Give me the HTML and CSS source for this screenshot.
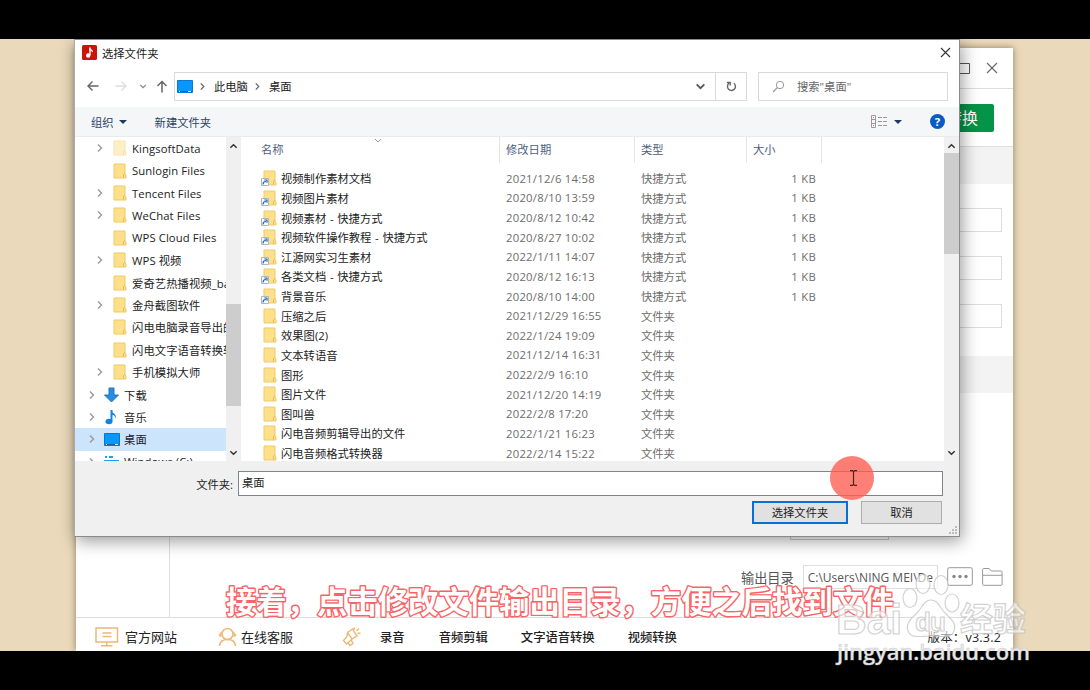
FILE: index.html
```
<!DOCTYPE html>
<html lang="zh-CN">
<head>
    <meta charset="UTF-8">
    <title>选择文件夹</title>
    <link rel="stylesheet" href="styles.css">
</head>
<body>
    <svg width="0" height="0" class="defs">
        <symbol id="folder" viewBox="0 0 14 16"><path d="M1 1h11v10l1 1v3H1z" fill="#ffe08a" stroke="#efc968" stroke-width="1"/><path d="M10.500 14.500v-3l1.500-1.500" fill="none" stroke="#e5b94f"/></symbol>
        <symbol id="desk" viewBox="0 0 16 13"><path d="M.5.5h15v12H.5z" fill="#0a97fb" stroke="#0b78d0"/><path d="M1 11.500h14" stroke="#0666b8"/><path d="M2 11.500h1M11 11.500h3" stroke="#d8efff"/></symbol>
        <symbol id="right" viewBox="0 0 8 10"><path d="M2 1.500l3.500 3.500L2 8.500" fill="none" stroke="currentColor" stroke-width="1.400"/></symbol>
        <symbol id="down" viewBox="0 0 10 8"><path d="M1.500 2L5 5.500 8.500 2" fill="none" stroke="currentColor" stroke-width="1.600"/></symbol>
        <symbol id="up" viewBox="0 0 10 8"><path d="M1.500 6L5 2.500 8.500 6" fill="none" stroke="currentColor" stroke-width="1.600"/></symbol>
        <symbol id="link" viewBox="0 0 8 8"><path d="M.5.5h7v7h-7z" fill="#fff" stroke="#a9b8c8"/><path d="M2 6.500c0-2 1-3 3-3M3.300 2h2.700v2.700" fill="none" stroke="#1c62b5" stroke-width="1.200"/></symbol>
    </svg>

    <div class="screen">
        <div class="app">
            <div class="app-title">
                <svg width="11" height="11"><path d="M.5.5h10v10H.5z" fill="none" stroke="#555"/></svg>
                <svg width="12" height="12"><path d="M1 1l10 10M11 1L1 11" stroke="#666" stroke-width="1.100"/></svg>
            </div>
            <div class="app-tools"><button class="convert">转换</button></div>
            <div class="app-main">
                <div class="side"></div>
                <div class="panel">
                    <div class="band"></div>
                    <div class="fields"><i></i><i></i><i></i></div>
                    <div class="band second"></div>
                    <div class="stub"></div>
                    <div class="output">
                        <span>输出目录</span>
                        <div class="path">C:\Users\NING MEI\Desktop</div>
                        <svg class="more" width="26" height="20"><rect x=".7" y=".7" width="24.600" height="17.600" rx="1.500" fill="#fff" stroke="#999"/><g fill="#888"><circle cx="7" cy="9.500" r="1.700"/><circle cx="13" cy="9.500" r="1.700"/><circle cx="19" cy="9.500" r="1.700"/></g></svg>
                        <svg width="21" height="20"><path d="M.6 17.500V2.600Q.6 1.500 1.700 1.500h5.500l2 2.500h9.700q1.200 0 1.200 1.200v12.300q0 .8-.9.800H1.500q-.9 0-.9-.8zM.6 8.300h19.500" fill="none" stroke="#999"/></svg>
                    </div>
                </div>
            </div>
            <div class="status">
                <svg width="24" height="20" class="s1"><g fill="none" stroke="#edb877" stroke-width="1.500"><path d="M1 1h21.500v14H1zM11.700 15v3.500M6 18.700h11.500M7.500 6h9M7.500 9.500h9"/></g></svg>
                <span class="t1">官方网站</span>
                <svg width="19" height="20" class="s2"><g fill="none" stroke="#edb877" stroke-width="1.600"><circle cx="9.500" cy="7" r="5.500"/><path d="M3.500 5.500L1.500 8l2 1.500M15.500 5.500l2 2.500-2 1.500M1.500 19c.3-4 3-6.500 8-6.500s7.700 2.500 8 6.500"/></g></svg>
                <span class="t2">在线客服</span>
                <svg width="19" height="20" class="s3"><g fill="none" stroke="#edb877" stroke-width="1.400"><path d="M5.500 5.500l5-3.500 4.500 7-5 3zM5.500 5.500l-.5 4-3.500 4 3 3.500 4-3.500 1.500-1.500M6 16l2 2.500 3-2-1.500-3M12 2.500L12.500.5M14.500 4l2.500-2.500M15.500 6.500l3-.5"/></g></svg>
                <b class="a1">录音</b><b class="a2">音频剪辑</b><b class="a3">文字语音转换</b><b class="a4">视频转换</b>
                <span class="version">版本：v3.3.2</span>
            </div>
        </div>

        <div class="dialog">
            <div class="titlebar">
                <svg width="15" height="15"><rect width="15" height="15" rx="1.500" fill="#c91409"/><path d="M8 2.500v7.500" stroke="#fff" stroke-width="1.400"/><circle cx="6.200" cy="10.500" r="2.200" fill="#fff"/><path d="M7.500 2c.5 2.500 4 2.500 3.500 5.500-1-1.500-2-1.500-3.500-2z" fill="#fff"/></svg>
                <span>选择文件夹</span>
                <svg class="close" width="11" height="11"><path d="M1 1l9 9M10 1L1 10" stroke="#333" stroke-width="1.100"/></svg>
            </div>
            <div class="nav">
                <svg class="back" width="12" height="12"><path d="M11.500 6H1M5.500 1.500L1 6l4.500 4.500" fill="none" stroke="#666" stroke-width="1.400"/></svg>
                <svg class="fwd" width="12" height="12"><path d="M.5 6H11M6.500 1.500L11 6l-4.500 4.500" fill="none" stroke="#ddd" stroke-width="1.400"/></svg>
                <svg class="recent" width="8" height="7"><use href="#down"/></svg>
                <svg class="upward" width="12" height="13"><path d="M6 12.500V1.500M1.500 6L6 1.500 10.500 6" fill="none" stroke="#666" stroke-width="1.500"/></svg>
                <div class="address">
                    <svg width="16" height="13"><use href="#desk"/></svg>
                    <svg class="sep" width="7" height="9"><use href="#right"/></svg>
                    <span>此电脑</span>
                    <svg class="sep" width="7" height="9"><use href="#right"/></svg>
                    <span>桌面</span>
                    <svg class="drop" width="11" height="9"><use href="#down"/></svg>
                    <div class="refresh"><svg width="11" height="12"><path d="M3 3.300A4 4 0 1 0 7.800 3.200M1 2.500h3.200v3" fill="none" stroke="#666" stroke-width="1.400"/></svg></div>
                </div>
                <div class="search">
                    <svg width="13" height="13"><circle cx="8" cy="5" r="3.700" fill="none" stroke="#999"/><path d="M5.300 7.700L1 12" stroke="#999" stroke-width="1.200"/></svg>
                    <span>搜索"桌面"</span>
                </div>
            </div>
            <div class="toolbar">
                <span>组织</span><i class="caret"></i>
                <span class="newdir">新建文件夹</span>
                <svg class="view" width="16" height="13"><g fill="none" stroke="#999"><path d="M.5.5h4v12h-4zM.5 4.500h4M.5 8.500h4M7 2.500h4M12 2.500h4M7 6.500h4M12 6.500h4M7 10.500h4M12 10.500h4"/></g><path d="M2 2.500h1M2 10.500h1" stroke="#d66"/></svg>
                <i class="caret"></i>
                <div class="help">?</div>
            </div>
            <div class="content">
                <div class="tree" id="tree"></div>
                <div class="scroll left"><svg width="9" height="8"><use href="#up"/></svg><i></i><svg width="9" height="8"><use href="#down"/></svg></div>
                <div class="list">
                    <div class="row head"><span>名称</span><span>修改日期</span><span>类型</span><span>大小</span>
                        <svg class="sort" width="8" height="6"><path d="M1 1l3 3 3-3" fill="none" stroke="#999"/></svg>
                    </div>
                    <div id="files"></div>
                </div>
                <div class="scroll main"><svg width="9" height="8"><use href="#up"/></svg><i></i><svg width="9" height="8"><use href="#down"/></svg></div>
            </div>
            <div class="footer">
                <div class="name"><label>文件夹:</label><div class="input">桌面</div></div>
                <div class="buttons"><button class="primary">选择文件夹</button><button>取消</button></div>
                <svg class="grip" width="9" height="9"><path d="M7 1h2M4 4h2M7 4h2M1 7h2M4 7h2M7 7h2" stroke="#aaa" stroke-width="1.500"/></svg>
            </div>
        </div>

        <div class="click"><svg width="9" height="16"><path d="M1 .7h2.500l1 1 1-1H8M4.500 1.500v13M1 15.300h2.500l1-1 1 1H8" fill="none" stroke="#4a2522" stroke-width="1.200"/></svg></div>
        <svg class="subtitle" width="680" height="44"><text x="4" y="33">接着，点击修改文件输出目录，方便之后找到文件</text></svg>
    </div>

    <div class="watermark">
        <svg width="200" height="100" viewBox="0 0 200 100">
            <g class="paw">
                <ellipse cx="75" cy="32" rx="7" ry="9.500"/><ellipse cx="88" cy="18" rx="7" ry="9.500"/><ellipse cx="106" cy="19" rx="7" ry="9.500"/><ellipse cx="117" cy="37" rx="7" ry="9"/>
                <path d="M96 34c-7 0-9 8-14 13s-12 10-9 18 11 5 23 5 20 3 23-5-4-13-9-18-7-13-14-13z"/>
            </g>
            <text class="logo" x="1" y="68" textLength="66" lengthAdjust="spacingAndGlyphs">Bai</text>
            <text class="logo du" x="80" y="65" textLength="31">du</text>
            <text class="logo cn" x="125" y="65" textLength="66">经验</text>
            <text class="url" x="2" y="94" textLength="193">jingyan.baidu.com</text>
        </svg>
    </div>

<script>
    // [icon, label, has arrow]
    const tree = [
        ['folder', 'KingsoftData', 1], ['folder', 'Sunlogin Files', 0], ['folder', 'Tencent Files', 1],
        ['folder', 'WeChat Files', 1], ['folder', 'WPS Cloud Files', 0], ['folder', 'WPS 视频', 1],
        ['folder', '爱奇艺热播视频_baidu', 0], ['folder', '金舟截图软件', 1], ['folder', '闪电电脑录音导出的文件', 0],
        ['folder', '闪电文字语音转换软件', 0], ['folder', '手机模拟大师', 1],
        ['download', '下载', 1], ['music', '音乐', 1], ['desk', '桌面', 1], ['drive', 'Windows (C:)', 1]
    ];
    const icons = {
        folder: '<svg width="14" height="16"><use href="#folder"/></svg>',
        desk: '<svg width="16" height="13"><use href="#desk"/></svg>',
        download: '<svg width="15" height="16"><path d="M5 1h5v7h4.500l-7 7-7-7H5z" fill="#2b8de0" stroke="#1f74c4"/></svg>',
        music: '<svg width="15" height="16"><ellipse cx="5" cy="12.500" rx="3.500" ry="2.700" fill="#1583dc"/><path d="M7.500 12V1" stroke="#1583dc" stroke-width="2"/><path d="M7 1c1 3.500 7 4 4 9 .5-3-1-4-4-4.500z" fill="#1583dc"/></svg>',
        drive: '<svg width="15" height="16"><path d="M1 3h2M5 3h4M0 7h14v5H0z" stroke="#18a4e8" stroke-width="2" fill="#aaa"/></svg>'
    };
    document.getElementById('tree').innerHTML = tree.map(([icon, label, arrow]) => {
        const cls = (icon === 'folder' ? 'sub' : 'root') + (icon === 'desk' ? ' selected' : '');
        return `<div class="node ${cls}"><div class="arrow">${arrow ? '<svg width="8" height="10"><use href="#right"/></svg>' : ''}</div><div class="icon">${icons[icon]}</div><span>${label}</span></div>`;
    }).join('');

    const files = [
        ['视频制作素材文档', '2021/12/6 14:58', 1], ['视频图片素材', '2020/8/10 13:59', 1],
        ['视频素材 - 快捷方式', '2020/8/12 10:42', 1], ['视频软件操作教程 - 快捷方式', '2020/8/27 10:02', 1],
        ['江源网实习生素材', '2022/1/11 14:07', 1], ['各类文档 - 快捷方式', '2020/8/12 16:13', 1],
        ['背景音乐', '2020/8/10 14:00', 1], ['压缩之后', '2021/12/29 16:55', 0],
        ['效果图(2)', '2022/1/24 19:09', 0], ['文本转语音', '2021/12/14 16:31', 0],
        ['图形', '2022/2/9 16:10', 0], ['图片文件', '2021/12/20 14:19', 0],
        ['图叫兽', '2022/2/8 17:20', 0], ['闪电音频剪辑导出的文件', '2022/1/21 16:23', 0],
        ['闪电音频格式转换器', '2022/2/14 15:22', 0]
    ];
    document.getElementById('files').innerHTML = files.map(([name, date, link]) =>
        `<div class="row"><span class="file"><i class="ficon"><svg width="14" height="16"><use href="#folder"/></svg>${link ? '<svg class="link" width="8" height="8"><use href="#link"/></svg>' : ''}</i>${name}</span><span class="date">${date}</span><span>${link ? '快捷方式' : '文件夹'}</span><span class="size">${link ? '1 KB' : ''}</span></div>`
    ).join('');
</script>
</body>
</html>
```
FILE: styles.css
```
* {
    box-sizing: border-box;
}
body {
    display: flow-root;
    margin: 0;
    height: 690px;
    overflow: hidden;
    background: #000;
    font-family: "Open Sans", "Noto Sans CJK SC", sans-serif;
    font-size: 11.3px;
    color: #222;
}
svg {
    display: block;
    flex: none;
}
.defs {
    position: absolute;
}
span, b, label {
    white-space: nowrap;
}
button {
    font-family: inherit;
    padding: 0;
}
.screen {
    display: flow-root;
    position: relative;
    margin-top: 39px;
    height: 612px;
    background: #ead9bb;
    overflow: hidden;
}

/* application window behind the dialog */
.app {
    margin: 9px 0 0 76px;
    width: 937px;
    height: 603px;
    display: flex;
    flex-direction: column;
    background: #fff;
    box-shadow: 0 0 7px rgba(80, 60, 30, 0.6);
}
.app-title {
    height: 41px;
    display: flex;
    justify-content: flex-end;
    align-items: center;
    gap: 16px;
    padding-right: 15px;
    border-bottom: 1px solid #ddd;
}
.app-tools {
    height: 58px;
    display: flex;
    justify-content: flex-end;
    align-items: center;
    padding-right: 19px;
    border-bottom: 1px solid #ddd;
}
.convert {
    width: 84px;
    height: 28px;
    border: 0;
    border-radius: 2px;
    background: #049347;
    color: #fff;
    font-size: 16px;
    line-height: 28px;
    text-align: right;
    padding-right: 16px;
}
.app-main {
    flex: 1;
    display: flex;
}
.side {
    width: 94px;
    border-right: 1px solid #ddd;
}
.panel {
    flex: 1;
}
.band {
    height: 37px;
    background: #f3f3f3;
}
.fields {
    height: 172px;
    padding: 24px 11px 0 0;
    display: flex;
    flex-direction: column;
    align-items: flex-end;
    gap: 24px;
}
.fields i {
    width: 150px;
    height: 24px;
    border: 1px solid #ddd;
}
.stub {
    width: 99px;
    height: 147px;
    margin-left: 620px;
    border: 1px solid #ccc;
    border-top: 0;
}
.output {
    height: 24px;
    margin-top: 25px;
    padding-left: 571px;
    display: flex;
    align-items: center;
    font-size: 13.2px;
    color: #555;
}
.path {
    width: 135px;
    height: 24px;
    margin: 0 9px;
    padding: 0 4px;
    border: 1px solid #ddd;
    font-size: 12px;
    line-height: 23px;
    white-space: nowrap;
    overflow: clip;
    overflow-clip-margin: content-box;
}
.more {
    margin-right: 9px;
}
.status {
    height: 34px;
    display: flex;
    align-items: center;
    padding: 4px 12px 0 19px;
    border-top: 1px solid #ddd;
    font-size: 13px;
}
.status b {
    font-weight: 500;
    font-size: 12.3px;
}
.t1 { margin-left: 6px; }
.s2 { margin-left: 41px; }
.t2 { margin-left: 4px; }
.s3 { margin-left: 49px; }
.a1 { margin-left: 19px; }
.a2 { margin-left: 34px; }
.a3, .a4 { margin-left: 33px; }
.version {
    margin-left: auto;
    font-size: 12.5px;
    letter-spacing: 0.2px;
}

/* folder dialog */
.dialog {
    position: absolute;
    left: 74px;
    top: 0;
    width: 886px;
    height: 498px;
    display: flex;
    flex-direction: column;
    background: #fff;
    border: 1px solid #8a8a8a;
    border-left-color: #aaa;
    box-shadow: 2px 4px 16px rgba(0, 0, 0, 0.4);
}
.titlebar {
    height: 25px;
    display: flex;
    align-items: center;
    padding: 0 8px 0 7px;
    gap: 5px;
}
.close {
    margin-left: auto;
}
.nav {
    height: 42px;
    display: flex;
    align-items: center;
    padding-left: 12px;
}
.fwd { margin-left: 16px; }
.recent { margin-left: 12px; color: #888; }
.upward { margin-left: 9px; }
.address {
    width: 573px;
    height: 29px;
    margin-left: 6px;
    padding-left: 2px;
    display: flex;
    align-items: center;
    border: 1px solid #d9d9d9;
}
.sep {
    margin: 0 8px 0 6px;
    color: #666;
}
.drop {
    margin-left: auto;
    margin-right: 9px;
    color: #555;
}
.refresh {
    width: 31px;
    height: 27px;
    display: flex;
    align-items: center;
    justify-content: center;
    border-left: 1px solid #d9d9d9;
}
.search {
    width: 190px;
    height: 29px;
    margin-left: 11px;
    padding-left: 13px;
    display: flex;
    align-items: center;
    gap: 12px;
    border: 1px solid #d9d9d9;
    color: #666;
}
.toolbar {
    height: 30px;
    display: flex;
    align-items: center;
    padding: 0 14px 0 16px;
    background: #f4f6f8;
    border-bottom: 1px solid #e9ebee;
    color: #2c4466;
}
.caret {
    margin-left: 5px;
    border: 4px solid transparent;
    border-top: 4px solid #1c3a63;
    border-bottom: 0;
}
.newdir {
    margin-left: 28px;
}
.view {
    margin-left: auto;
    margin-right: 2px;
}
.help {
    width: 15px;
    height: 15px;
    margin-left: 28px;
    border-radius: 50%;
    background: #0b5cc0;
    color: #fff;
    font-weight: bold;
    line-height: 15px;
    text-align: center;
}
.content {
    height: 324px;
    display: flex;
    overflow: hidden;
}
.tree {
    width: 151px;
    overflow: hidden;
}
.node {
    height: 22.42px;
    display: flex;
    align-items: center;
    letter-spacing: 0.09px;
}
.arrow {
    flex: none;
    width: 8px;
    color: #999;
}
.icon {
    flex: none;
}
.sub {
    padding-left: 21px;
}
.sub .icon {
    width: 14px;
    margin: 0 5px 0 9px;
}
.node:first-child .icon {
    opacity: 0.5;
}
.root {
    padding-left: 13px;
}
.root .icon {
    width: 16px;
    margin: 0 4px 0 8px;
}
.selected {
    background: #cce4fc;
}
.scroll {
    width: 15px;
    display: flex;
    flex-direction: column;
    align-items: center;
    padding: 5px 0 4px;
    background: #f0f0f0;
    color: #333;
}
.scroll i {
    width: 100%;
    background: #cdcdcd;
}
.scroll svg:last-child {
    margin-top: auto;
}
.left i {
    height: 102px;
    margin-top: 154px;
}
.main i {
    height: 101px;
    margin-top: 3px;
}
.list {
    flex: 1;
    overflow: hidden;
}
.row {
    height: 19.63px;
    display: grid;
    grid-template-columns: 259px 135px 112px 75px;
    align-items: center;
    color: #6d6d6d;
}
.row > span {
    padding-left: 6px;
}
.row.head {
    position: relative;
    height: 31.5px;
    color: #4d607c;
}
.row.head span {
    height: 26px;
    line-height: 26px;
    border-right: 1px solid #e5e5e5;
    align-self: start;
}
.row.head span:first-child {
    padding-left: 20px;
}
.sort {
    position: absolute;
    left: 133px;
    top: 1px;
}
.row .file {
    display: flex;
    align-items: center;
    padding-left: 22px;
    color: #222;
    word-spacing: 0.8px;
}
.row .date {
    letter-spacing: 0.24px;
}
.ficon {
    position: relative;
    margin-right: 4px;
}
.link {
    position: absolute;
    left: -2px;
    bottom: 0;
}
.row .size {
    text-align: right;
    padding-right: 6px;
    letter-spacing: 0.3px;
}
.footer {
    position: relative;
    flex: 1;
    padding: 10px 16px 0 0;
    background: #f0f0f0;
}
.name, .buttons {
    display: flex;
    justify-content: flex-end;
}
.name {
    align-items: center;
    gap: 5px;
}
.input {
    width: 705px;
    height: 25px;
    padding-left: 3px;
    line-height: 21px;
    background: #fff;
    border: 1px solid #7f858d;
}
.buttons {
    margin-top: 5px;
    gap: 13px;
    padding-right: 1px;
}
.buttons button {
    width: 81px;
    height: 23px;
    font-size: 11.3px;
    line-height: 18px;
    background: #e1e1e1;
    border: 1px solid #adadad;
    color: #222;
}
.buttons .primary {
    width: 96px;
    border: 2px solid #0a6fd6;
}
.grip {
    position: absolute;
    right: 2px;
    bottom: 1px;
}

/* recording overlays */
.click {
    position: absolute;
    left: 830px;
    top: 417px;
    width: 44px;
    height: 44px;
    display: flex;
    align-items: center;
    justify-content: center;
    border-radius: 50%;
    background: rgba(255, 92, 80, 0.78);
    padding-left: 3px;
}
.subtitle {
    position: absolute;
    left: 222px;
    top: 541px;
    font-family: "Noto Sans CJK SC", sans-serif;
    font-size: 30.35px;
    font-weight: 700;
}
.subtitle text {
    fill: #fff;
    stroke: #f86466;
    stroke-width: 2.8;
    stroke-linejoin: round;
    paint-order: stroke fill;
}
.watermark {
    position: absolute;
    left: 835px;
    top: 566px;
}
.paw, .logo, .url {
    fill: rgba(255, 255, 255, 0.6);
    stroke: rgba(195, 195, 195, 0.75);
    stroke-width: 1.2;
}
.logo {
    font-family: "Liberation Sans", sans-serif;
    font-weight: bold;
    font-size: 42px;
}
.du {
    font-size: 26px;
}
.cn {
    font-family: "Noto Sans CJK SC", sans-serif;
    font-size: 33px;
}
.url {
    font-family: "Open Sans", sans-serif;
    font-size: 22px;
    font-weight: 600;
    fill: #e8e8e8;
    stroke-width: 0.5;
}
```
